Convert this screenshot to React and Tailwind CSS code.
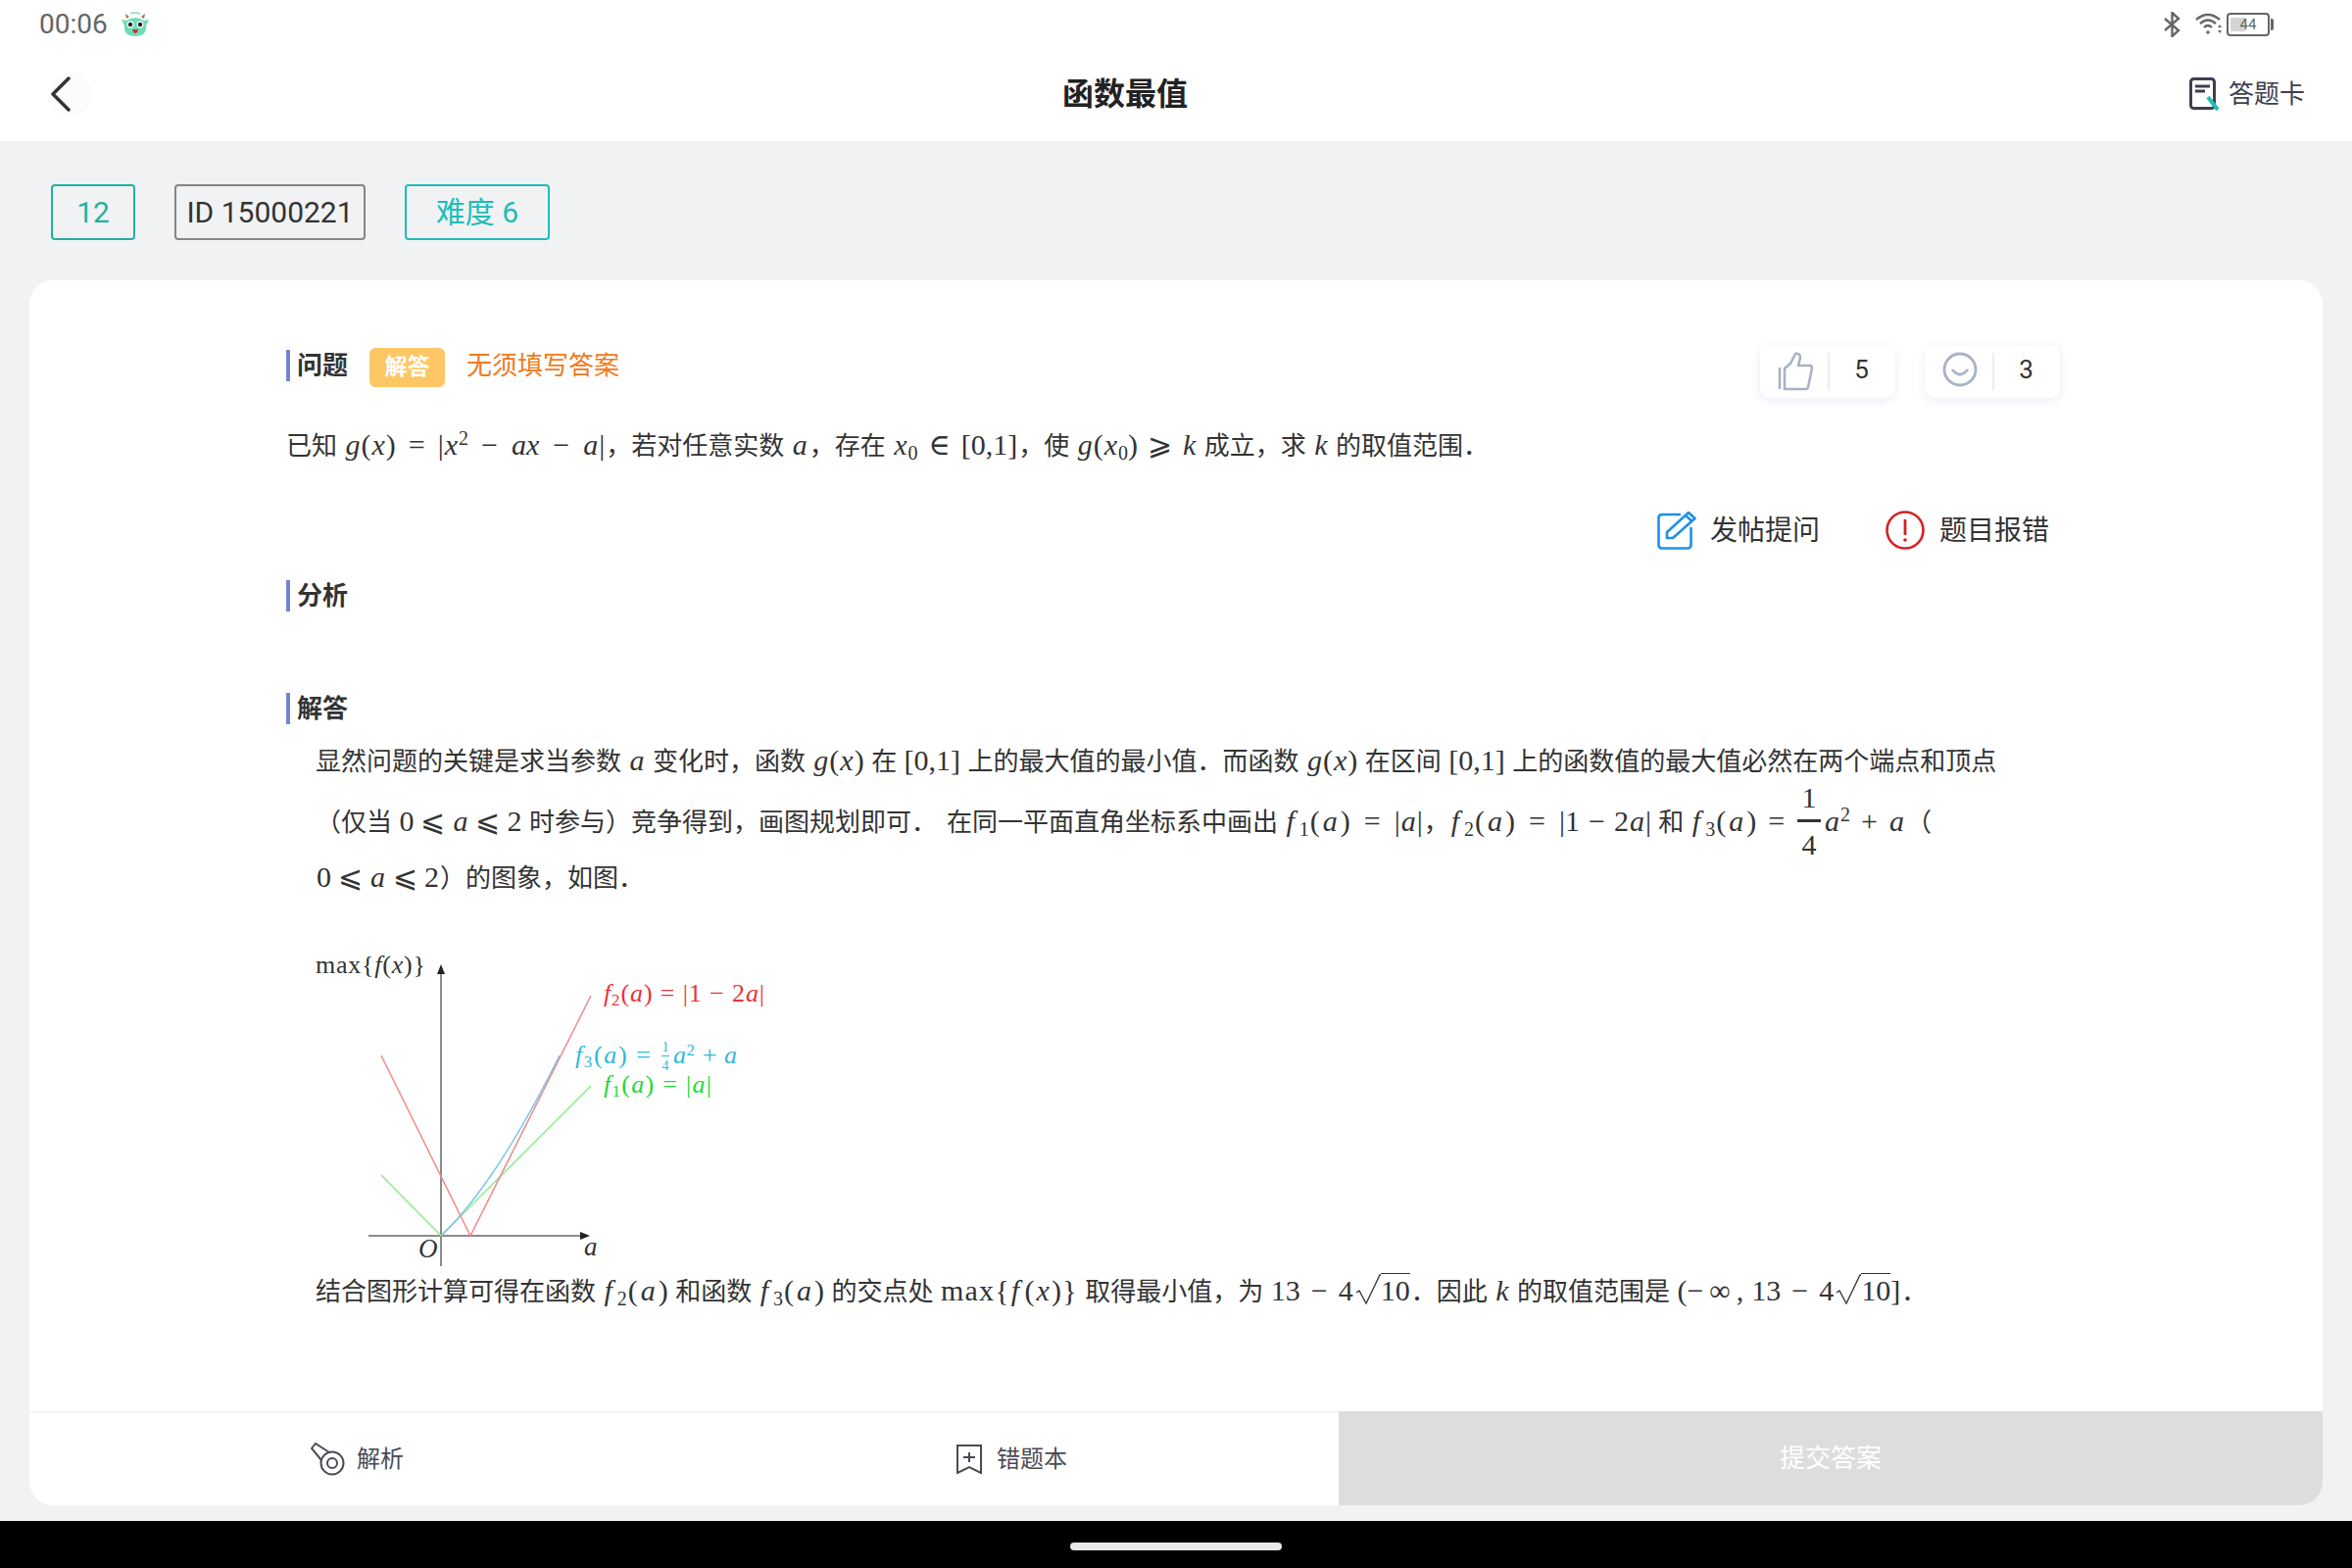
const sans = "font-['Roboto','Noto_Sans_CJK_SC',sans-serif]";

// math text in the body copy
function M({ children, className = "" }) {
  return <span className={`mx-[1px] font-['Liberation_Serif','DejaVu_Serif',serif] text-[30px] ${className}`}>{children}</span>;
}
function V({ children }) {
  return <i className="px-[1px] font-['Liberation_Serif',serif]">{children}</i>;
}
function F() {
  return <i className="pl-[1px] pr-[4px] font-['Liberation_Serif',serif]">f</i>;
}
// f_n(a), the Liberation glyphs are narrower than the reference's math font
function Fn({ n }) {
  return (
    <>
      <F />
      <sub className="px-[1px] text-[20px]">{n}</sub>(<i className="px-[3px] font-['Liberation_Serif',serif]">a</i>)
    </>
  );
}
function Op({ children }) {
  return <span className="mx-[11px]">{children}</span>;
}
function Eq() {
  return <span className="mx-[14px]">=</span>;
}
function Le({ children, wide }) {
  return <span className={wide ? "mx-[10px]" : "mx-[7px]"}>{children}</span>;
}
function Sub({ children }) {
  return <sub className="text-[20px]">{children}</sub>;
}
function Sup({ children }) {
  return <sup className="text-[20px]">{children}</sup>;
}
function Root({ children }) {
  return (
    <>
      <svg className="inline-block align-[-5px] ml-[2px]" width="26" height="32" viewBox="0 0 26 32" fill="none" stroke="#333" strokeWidth="1.300">
        <path d="M1 19 L4 17 L11 30 L25 1 H26" />
      </svg>
      <span className="border-t border-[#333]">{children}</span>
    </>
  );
}

function SectionTitle({ children }) {
  return (
    <div className="flex items-center h-[32px]">
      <div className="w-[4px] h-[32px] bg-[#7483cf]" />
      <span className="ml-[7px] text-[26px] font-bold text-[#333]">{children}</span>
    </div>
  );
}

function Mascot() {
  return (
    <svg width="30" height="26" viewBox="0 0 30 26">
      <path d="M6 7 L5 2 L9 5Z M24 7 L25 2 L21 5Z" fill="#b5654a" />
      <path d="M10 2 Q15 0 20 2" stroke="#7fdcc0" strokeWidth="1.5" fill="none" />
      <path d="M1 8 L6 9 Q15 3 24 9 L29 8 L26 14 Q27 25 15 25 Q3 25 4 14Z" fill="#6fdcb8" />
      <circle cx="10" cy="13" r="3.4" fill="#fff" />
      <circle cx="20" cy="13" r="3.4" fill="#fff" />
      <circle cx="10" cy="13" r="2.2" fill="#222" />
      <circle cx="20" cy="13" r="2.2" fill="#222" />
      <path d="M12 18 H18 Q17 22 15 22 Q13 22 12 18Z" fill="#c8342c" />
    </svg>
  );
}

function StatusIcons() {
  return (
    <div className="flex items-center">
      <svg width="18" height="26" viewBox="0 0 18 26" fill="none" stroke="#666" strokeWidth="2.4">
        <path d="M1 7 L15 19 L8.5 25 V1 L15 7 L1 19" />
      </svg>
      <svg className="ml-[14px]" width="28" height="24" viewBox="0 0 28 24" fill="none" stroke="#666" strokeWidth="2.4">
        <path d="M1 7 Q13 -3 25 7" />
        <path d="M5 11 Q13 4 21 11" />
        <path d="M9 15 Q13 11 17 15" />
        <circle cx="13" cy="20" r="1.8" fill="#666" stroke="none" />
        <path d="M23 15 l2 -3 l2 3Z M23 18 l2 3 l2 -3Z" fill="#666" stroke="none" />
      </svg>
      <div className="ml-[4px] relative w-[44px] h-[24px] rounded-[4px] border-2 border-[#666] flex items-center justify-center">
        <div className="absolute left-[2px] top-[3px] w-[15px] h-[14px] bg-[#d4d4d4]" />
        <span className="relative text-[15px] leading-none text-[#666] font-['Roboto',sans-serif]">44</span>
      </div>
      <div className="w-[3px] h-[12px] bg-[#666] rounded-r-[2px] ml-[1px]" />
    </div>
  );
}

function CardIcon() {
  return (
    <svg width="32" height="34" viewBox="0 0 32 34" fill="none">
      <rect x="1.5" y="1.5" width="24" height="30" rx="3" stroke="#3f3f52" strokeWidth="3" />
      <path d="M6 9 H21 M6 14 H16" stroke="#3f3f52" strokeWidth="3" />
      <path d="M19 20 L29 33" stroke="#1dbdb8" strokeWidth="4" />
    </svg>
  );
}

function Tag({ className, children }) {
  return (
    <div className={`h-[57px] border-2 rounded-[4px] flex items-center justify-center text-[30px] ${className}`}>
      {children}
    </div>
  );
}

function ThumbIcon() {
  return (
    <svg width="36" height="40" viewBox="0 0 36 40" fill="none" stroke="#a8b2c3" strokeWidth="2.6" strokeLinejoin="round">
      <path d="M2 16 V38" />
      <path d="M7 38 V17 L13 12 L18 2 C21 1 23 3 23 6 L21 14 H33 C35 14 35 16 35 17 L31 36 C31 37 30 38 29 38Z" />
    </svg>
  );
}

function SmileIcon() {
  return (
    <svg className="-mt-[4px]" width="36" height="36" viewBox="0 0 36 36" fill="none" stroke="#a8b2c3" strokeWidth="2.8">
      <circle cx="18" cy="18" r="16" />
      <path d="M10 18 Q18 28 26 18" />
    </svg>
  );
}

function CountBox({ icon, count }) {
  return (
    <div className="w-[138px] h-[54px] rounded-[10px] bg-white shadow-[0_2px_10px_rgba(150,165,210,0.22)] flex items-center">
      <div className="w-[69px] pl-[2px] flex justify-center">{icon}</div>
      <div className="w-[2px] h-[38px] bg-[#eceef1]" />
      <div className={`flex-1 pb-[3px] pr-[2px] text-center text-[26px] text-[#333] ${sans}`}>{count}</div>
    </div>
  );
}

function PencilIcon() {
  return (
    <svg width="40" height="40" viewBox="0 0 40 40" fill="none" stroke="#2090e8" strokeWidth="2.6" strokeLinejoin="round">
      <path d="M24 4 H5 Q1.5 4 1.5 7.5 V35 Q1.5 38.5 5 38.5 H31 Q34.500 38.500 34.500 35 V17" />
      <path d="M10 28 V22 L32 2 L38.500 8 L16 28Z" />
      <path d="M29 5 L35.500 11" />
    </svg>
  );
}

function AlertIcon() {
  return (
    <svg width="40" height="40" viewBox="0 0 40 40" fill="none" stroke="#d42222" strokeWidth="2.6">
      <circle cx="20" cy="20" r="18.500" />
      <path d="M20 9 V25" strokeWidth="2.8" />
      <circle cx="20" cy="30" r="1.800" fill="#d42222" stroke="none" />
    </svg>
  );
}

function KeyIcon() {
  return (
    <svg width="36" height="34" viewBox="0 0 36 34" fill="none" stroke="#4a4a55" strokeWidth="2">
      <circle cx="22" cy="21" r="11.500" />
      <circle cx="22" cy="21" r="5" />
      <path d="M11 18 L1 6 L5 1 L19 10" />
    </svg>
  );
}

function BookmarkIcon() {
  return (
    <svg width="26" height="30" viewBox="0 0 26 30" fill="none" stroke="#4a4a55" strokeWidth="2">
      <path d="M1 1 H25 V29 L13 23 L1 29Z" />
      <path d="M13 8 V18 M7 13 H19" />
    </svg>
  );
}

function Graph() {
  return (
    <svg className="block" width="498" height="342" viewBox="22 0 498 342" fontFamily="'Liberation Serif', serif">
      <path d="M150 342 V40" stroke="#666" strokeWidth="1.500" />
      <path d="M146 44 L150 34 L154 44Z" fill="#222" />
      <path d="M76 311 H296" stroke="#666" strokeWidth="1.500" />
      <path d="M292 307 L302 311 L292 315Z" fill="#222" />
      <path d="M89 249 L150 311 L303 158" fill="none" stroke="#8fe88f" strokeWidth="1.500" />
      <path d="M150 311 Q206 258 271 127" fill="none" stroke="#78c6e8" strokeWidth="1.500" />
      <path d="M89 127 L180 311 L303 66" fill="none" stroke="#f08a8a" strokeWidth="1.500" />
      <text x="22" y="43" fontSize="26" fill="#333" textLength="112">max{'{'}<tspan fontStyle="italic">f</tspan>(<tspan fontStyle="italic">x</tspan>){'}'}</text>
      <text x="127" y="333" fontSize="27" fontStyle="italic" fill="#333">O</text>
      <text x="296" y="331" fontSize="27" fontStyle="italic" fill="#333">a</text>
      <text x="316" y="72" fontSize="26" fill="#e8333a" textLength="164"><tspan fontStyle="italic">f</tspan><tspan fontSize="17" dy="4">2</tspan><tspan dy="-4">(</tspan><tspan fontStyle="italic">a</tspan>) = |1 − 2<tspan fontStyle="italic">a</tspan>|</text>
      <text x="287" y="135" fontSize="26" fill="#2fb8dc" textLength="77"><tspan fontStyle="italic">f</tspan><tspan fontSize="17" dy="4">3</tspan><tspan dy="-4">(</tspan><tspan fontStyle="italic">a</tspan>) =</text>
      <text x="379" y="123" fontSize="14" textAnchor="middle" fill="#2fb8dc">1</text>
      <path d="M375 127.500 H383" stroke="#2fb8dc" strokeWidth="1" />
      <text x="379" y="142" fontSize="14" textAnchor="middle" fill="#2fb8dc">4</text>
      <text x="387" y="135" fontSize="26" fill="#2fb8dc" textLength="65"><tspan fontStyle="italic">a</tspan><tspan fontSize="17" dy="-8">2</tspan><tspan dy="8"> + </tspan><tspan fontStyle="italic">a</tspan></text>
      <text x="316" y="165" fontSize="26" fill="#22d83a" textLength="110"><tspan fontStyle="italic">f</tspan><tspan fontSize="17" dy="4">1</tspan><tspan dy="-4">(</tspan><tspan fontStyle="italic">a</tspan>) = |<tspan fontStyle="italic">a</tspan>|</text>
    </svg>
  );
}

export default function App() {
  return (
    <div className={`w-[2400px] h-[1600px] flex flex-col bg-[#f1f2f4] overflow-hidden text-[#333] ${sans}`}>
      <div className="h-[144px] bg-white flex flex-col">
        <div className="h-[50px] pl-[40px] pr-[80px] flex items-center justify-between">
          <div className="flex items-center gap-[13px]">
            <span className="text-[28px] text-[#666]">00:06</span>
            <Mascot />
          </div>
          <StatusIcons />
        </div>
        <div className="relative h-[94px] pb-[2px] flex items-center justify-between pl-[50px] pr-[48px]">
          <div className="w-[44px] h-[44px] rounded-full bg-[#fcfcfc] flex items-center">
            <svg width="24" height="36" viewBox="0 0 24 36" fill="none" stroke="#333" strokeWidth="3.500" strokeLinecap="round" strokeLinejoin="round">
              <path d="M20 2 L4 18 L20 34" />
            </svg>
          </div>
          <div className="absolute left-0 right-[104px] text-center text-[32px] font-bold text-[#222] pointer-events-none">函数最值</div>
          <div className="flex items-center gap-[8px] text-[26px] text-[#3f3f52]">
            <CardIcon />
            <span>答题卡</span>
          </div>
        </div>
      </div>

      <div className="flex gap-[40px] pl-[52px] mt-[44px]">
        <Tag className="w-[86px] border-[#1fb3a0] text-[#1fb3a0]">12</Tag>
        <Tag className="w-[195px] border-[#85858a] text-[#333]">ID 15000221</Tag>
        <Tag className="w-[148px] border-[#1dbdb8] text-[#1dbdb8]">难度 6</Tag>
      </div>

      <div className="mx-[30px] mt-[41px] h-[1250px] rounded-[24px] bg-white flex flex-col overflow-hidden">
        <div className="flex-1 pl-[262px] pt-[66px] text-[26px] text-[#333]">
          <div className="w-[1810px] flex justify-between items-start h-[54px]">
            <div className="flex items-start mt-[3px]">
              <div className="mt-[2px]"><SectionTitle>问题</SectionTitle></div>
              <span className="ml-[22px] w-[77px] h-[40px] rounded-[6px] bg-[#fdc765] text-white text-[23px] font-bold flex items-center justify-center">解答</span>
              <span className="ml-[22px] h-[36px] leading-[36px] text-[#f07a1a]">无须填写答案</span>
            </div>
            <div className="flex gap-[30px]">
              <CountBox icon={<ThumbIcon />} count="5" />
              <CountBox icon={<SmileIcon />} count="3" />
            </div>
          </div>

          <div className="mt-[23px] h-[50px] leading-[50px] whitespace-nowrap">
            已知 <M><V>g</V>(<V>x</V>)<span className="mx-[13px]">=</span>|<V>x</V><Sup>2</Sup><span className="mx-[13px]">−</span><V>ax</V><span className="mx-[13px]">−</span><V>a</V>|</M>，若对任意实数 <M><V>a</V></M>，存在 <M><V>x</V><Sub>0</Sub><Op>∈</Op>[0,1]</M>，使 <M><V>g</V>(<V>x</V><Sub>0</Sub>)<Le wide>⩾</Le><V>k</V></M> 成立，求 <M><V>k</V></M> 的取值范围．
          </div>

          <div className="w-[1810px] mt-[42px] h-[40px] flex justify-end items-center gap-[67px] pr-[11px] text-[28px]">
            <div className="flex items-center gap-[14px]">
              <PencilIcon />
              <span className="pt-[2px]">发帖提问</span>
            </div>
            <div className="flex items-center gap-[15px]">
              <AlertIcon />
              <span className="pt-[2px]">题目报错</span>
            </div>
          </div>

          <div className="mt-[31px]"><SectionTitle>分析</SectionTitle></div>
          <div className="mt-[83px]"><SectionTitle>解答</SectionTitle></div>

          <div className="ml-[30px] whitespace-nowrap">
            <div className="mt-[12px] h-[50px] leading-[50px]">
              显然问题的关键是求当参数 <M><V>a</V></M> 变化时，函数 <M><V>g</V>(<V>x</V>)</M> 在 <M>[0,1]</M> 上的最大值的最小值．而函数 <M><V>g</V>(<V>x</V>)</M> 在区间 <M>[0,1]</M> 上的函数值的最大值必然在两个端点和顶点
            </div>
            <div className="mt-[12px] h-[50px] leading-[50px] flex items-center">
              <span>（仅当 <M>0<Le>⩽</Le><V>a</V><Le>⩽</Le>2</M> 时参与）竞争得到，画图规划即可．<span className="ml-[10px]">在同一平面直角坐标系中画出</span> <M><Fn n="1" /><Eq />|<V>a</V>|</M>，<M><Fn n="2" /><Eq />|1<span className="mx-[9px]">−</span>2<V>a</V>|</M> 和 <M><Fn n="3" /><span className="mx-[12px]">=</span></M></span>
              <span className="w-[24px] flex flex-col items-center font-['Liberation_Serif',serif] text-[30px]">
                <span className="w-full text-center leading-[44px] border-b-[3px] border-[#333]">1</span>
                <span className="leading-[46px]">4</span>
              </span>
              <span className="ml-[2px]"><M><V>a</V><Sup>2</Sup><Op>+</Op><V>a</V></M>（</span>
            </div>
            <div className="mt-[7px] h-[50px] leading-[50px]">
              <M>0<Le>⩽</Le><V>a</V><Le>⩽</Le>2</M>）的图象，如图．
            </div>
            <div className="mt-[30px]">
              <Graph />
            </div>
            <div className="h-[50px] leading-[50px]">
              结合图形计算可得在函数 <M><Fn n="2" /></M> 和函数 <M><Fn n="3" /></M> 的交点处 <M className="tracking-[1.2px]">max{'{'}<F />(<V>x</V>){'}'}</M> 取得最小值，为 <M>13<Op>−</Op>4<Root>10</Root></M>．因此 <M><V>k</V></M> 的取值范围是 <M>(−<span className="px-[6px]">∞</span>,<span className="ml-[8px]">13</span><Op>−</Op>4<Root>10</Root>]</M>．
            </div>
          </div>
        </div>

        <div className="h-[96px] flex text-[24px] text-[#4a4a55]">
          <div className="w-[1336px] border-t-2 border-[#f2f6f9] relative">
            <div className="absolute left-[287px] top-[29px] flex items-center gap-[11px]">
              <KeyIcon />
              <span>解析</span>
            </div>
            <div className="absolute left-[946px] top-[29px] flex items-center gap-[15px]">
              <BookmarkIcon />
              <span>错题本</span>
            </div>
          </div>
          <div className="flex-1 bg-[#dddddd] text-white text-[26px] flex items-center justify-center">提交答案</div>
        </div>
      </div>

      <div className="mt-[16px] flex-1 bg-black flex items-center justify-center">
        <div className="w-[216px] h-[8px] mt-[4px] rounded-full bg-[#e8e8e8]" />
      </div>
    </div>
  );
}
